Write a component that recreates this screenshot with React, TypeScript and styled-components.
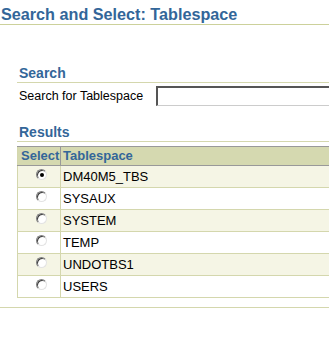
import React, { useState } from "react";
import styled, { createGlobalStyle } from "styled-components";

const GlobalStyle = createGlobalStyle`
  html, body {
    margin: 0;
    padding: 0;
    background: #ffffff;
    overflow: hidden;
  }
  body {
    font-family: "Liberation Sans", Arial, sans-serif;
    color: #000000;
  }
`;

const tablespaces = ["DM40M5_TBS", "SYSAUX", "SYSTEM", "TEMP", "UNDOTBS1", "USERS"];

const App = () => {
  const [selected, setSelected] = useState("DM40M5_TBS");
  const [query, setQuery] = useState("");

  return (
    <Page>
      <GlobalStyle />
      <Title>Search and Select: Tablespace</Title>
      <Content>
        <SectionHeader $top={40}>Search</SectionHeader>
        <SearchRow>
          <Label htmlFor="ts-search">Search for Tablespace</Label>
          <SearchInput
            id="ts-search"
            value={query}
            onChange={(e) => setQuery(e.target.value)}
          />
        </SearchRow>
        <SectionHeader $top={18}>Results</SectionHeader>
        <Table>
          <thead>
            <tr>
              <HeadCell $first>Select</HeadCell>
              <HeadCell>Tablespace</HeadCell>
            </tr>
          </thead>
          <tbody>
            {tablespaces.map((name, i) => (
              <Row key={name} $odd={i % 2 === 0} onClick={() => setSelected(name)}>
                <RadioCell>
                  <Radio $checked={selected === name} />
                </RadioCell>
                <NameCell>{name}</NameCell>
              </Row>
            ))}
          </tbody>
        </Table>
      </Content>
      <FooterRule />
    </Page>
  );
};

export default App;

const Page = styled.div`
  width: 329px;
  height: 354px;
  overflow: hidden;
`;

const Title = styled.h1`
  margin: 0;
  padding: 5px 0 0 1px;
  font-size: 16.2px;
  line-height: 19px;
  font-weight: bold;
  color: #336699;
  border-bottom: 1px solid #ccd19b;
  white-space: nowrap;
`;

const Content = styled.div`
  padding-left: 17px;
`;

const SectionHeader = styled.h2<{ $top: number }>`
  margin: ${(p) => p.$top}px 0 0 0;
  padding-left: 2px;
  font-size: 14px;
  line-height: 17px;
  font-weight: bold;
  color: #336699;
  border-bottom: 1px solid #d4d7ad;
`;

const SearchRow = styled.div`
  display: flex;
  align-items: center;
  gap: 13px;
  margin-top: 3px;
  height: 20px;
  padding-left: 2px;
  white-space: nowrap;
`;

const Label = styled.label`
  font-size: 12.5px;
`;

const SearchInput = styled.input`
  box-sizing: border-box;
  flex: none;
  width: 260px;
  height: 20px;
  margin: 0;
  padding: 0 3px;
  border-style: solid;
  border-width: 2px 0 1px 2px;
  border-color: #555555 #cccccc #cccccc #555555;
  font-family: "Liberation Sans", Arial, sans-serif;
  font-size: 12px;
  outline: none;
`;

const Table = styled.table`
  margin-top: 4px;
  width: 360px;
  border-collapse: collapse;
  border-left: 1px solid #d4d7ad;
  border-bottom: 1px solid #d4d7ad;
  font-size: 13px;
`;

const HeadCell = styled.th<{ $first?: boolean }>`
  height: 18px;
  padding: 0 0 0 ${(p) => (p.$first ? 3 : 2)}px;
  width: ${(p) => (p.$first ? "39px" : "auto")};
  text-align: left;
  font-weight: bold;
  color: #336699;
  background: #d5d9b0;
  border-top: 1px solid #999999;
  border-bottom: 1px solid #999999;
  border-left: ${(p) => (p.$first ? "none" : "1px solid #999999")};
  line-height: 18px;
`;

const Row = styled.tr<{ $odd: boolean }>`
  background: ${(p) => (p.$odd ? "#f5f5e5" : "#ffffff")};
  cursor: pointer;
`;

const RadioCell = styled.td`
  height: 21px;
  padding: 0 0 0 5px;
  text-align: center;
  vertical-align: middle;
  border-bottom: 1px solid #d4d7ad;
  line-height: 0;
`;

const NameCell = styled.td`
  height: 21px;
  padding: 0 0 0 2px;
  border-left: 1px solid #d4d7ad;
  border-bottom: 1px solid #d4d7ad;
  line-height: 21px;
`;

const Radio = styled.span<{ $checked: boolean }>`
  display: inline-block;
  position: relative;
  top: -2px;
  width: 9px;
  height: 9px;
  border-radius: 50%;
  background: #ffffff;
  border: 1px solid;
  border-color: #808080 #e3e3e3 #e3e3e3 #808080;
  box-shadow: inset 1px 1px 0 #404040;
  &::after {
    content: "";
    display: ${(p) => (p.$checked ? "block" : "none")};
    position: absolute;
    left: 2.5px;
    top: 2.5px;
    width: 4px;
    height: 4px;
    border-radius: 50%;
    background: #000000;
  }
`;

const FooterRule = styled.div`
  margin-top: 9px;
  border-top: 1px solid #d4d7ad;
`;
